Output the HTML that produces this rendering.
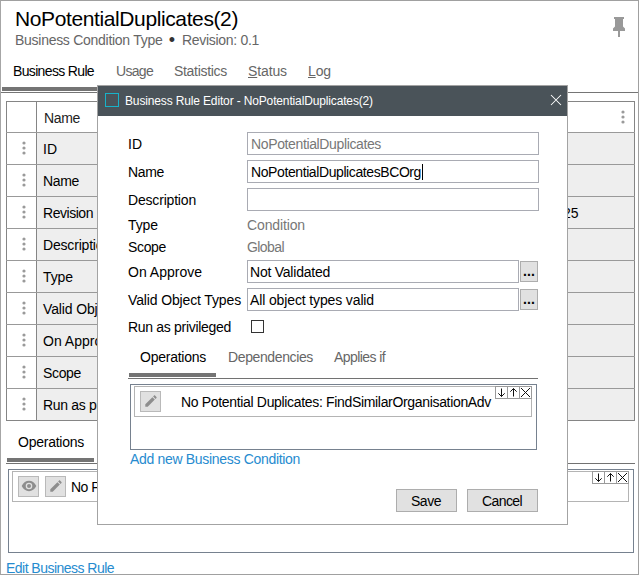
<!DOCTYPE html>
<html lang="en"><head><meta charset="utf-8"><title>Business Rule Editor</title>
<style>
html,body{margin:0;padding:0;background:#fff;}
body{width:639px;height:575px;overflow:hidden;font-family:"Liberation Sans",sans-serif;}
#root{position:relative;width:639px;height:575px;overflow:hidden;background:#fff;}
.t{position:absolute;white-space:pre;line-height:normal;font-family:"Liberation Sans",sans-serif;}
.b{position:absolute;box-sizing:border-box;}
u{text-decoration:underline;}

</style></head>
<body>
<div id="root">
<!-- page frame -->
<div class="b" style="left:0;top:0;width:639px;height:575px;border:1px solid #a0a0a0;border-left:1px solid #a6a6a6;"></div>
<!-- pin icon -->
<svg class="b" style="left:610px;top:14px" width="18" height="26" viewBox="610 14 18 26"><path d="M614 17H624V19H623V26.500L625 28.500V31H620V37H618V31H613V28.500L615 26.500V19H614Z" fill="#999"/></svg>
<!-- top tab bar -->
<div class="b" style="left:2px;top:87px;width:100px;height:4px;background:#747474"></div>
<div class="b" style="left:1px;top:92px;width:637px;height:1px;background:#757575"></div>
<!-- table -->
<div class="b" style="left:6px;top:101px;width:629px;height:320px;border:1px solid #858585;background:#fff"></div>
<div class="b" style="left:37px;top:133px;width:597px;height:287px;background:#eee"></div>
<div class="b" style="left:36px;top:101px;width:1px;height:320px;background:#858585"></div>
<div class="b" style="left:6px;top:132px;width:629px;height:1px;background:#999"></div>
<div class="b" style="left:6px;top:164px;width:629px;height:1px;background:#999"></div>
<div class="b" style="left:6px;top:196px;width:629px;height:1px;background:#999"></div>
<div class="b" style="left:6px;top:228px;width:629px;height:1px;background:#999"></div>
<div class="b" style="left:6px;top:260px;width:629px;height:1px;background:#999"></div>
<div class="b" style="left:6px;top:292px;width:629px;height:1px;background:#999"></div>
<div class="b" style="left:6px;top:324px;width:629px;height:1px;background:#999"></div>
<div class="b" style="left:6px;top:356px;width:629px;height:1px;background:#999"></div>
<div class="b" style="left:6px;top:388px;width:629px;height:1px;background:#999"></div>
<!-- row handles -->
<svg class="b" style="left:0;top:0" width="639" height="575" viewBox="0 0 639 575" fill="#9a9a9a">
<g id="dots"><circle cx="24" cy="143" r="1.600"/><circle cx="24" cy="148" r="1.600"/><circle cx="24" cy="153" r="1.600"/></g>
<g><circle cx="24" cy="175" r="1.600"/><circle cx="24" cy="180" r="1.600"/><circle cx="24" cy="185" r="1.600"/></g>
<g><circle cx="24" cy="207" r="1.600"/><circle cx="24" cy="212" r="1.600"/><circle cx="24" cy="217" r="1.600"/></g>
<g><circle cx="24" cy="239" r="1.600"/><circle cx="24" cy="244" r="1.600"/><circle cx="24" cy="249" r="1.600"/></g>
<g><circle cx="24" cy="271" r="1.600"/><circle cx="24" cy="276" r="1.600"/><circle cx="24" cy="281" r="1.600"/></g>
<g><circle cx="24" cy="303" r="1.600"/><circle cx="24" cy="308" r="1.600"/><circle cx="24" cy="313" r="1.600"/></g>
<g><circle cx="24" cy="335" r="1.600"/><circle cx="24" cy="340" r="1.600"/><circle cx="24" cy="345" r="1.600"/></g>
<g><circle cx="24" cy="367" r="1.600"/><circle cx="24" cy="372" r="1.600"/><circle cx="24" cy="377" r="1.600"/></g>
<g><circle cx="24" cy="399" r="1.600"/><circle cx="24" cy="404" r="1.600"/><circle cx="24" cy="409" r="1.600"/></g>
<g><circle cx="623" cy="112" r="1.600"/><circle cx="623" cy="117" r="1.600"/><circle cx="623" cy="122" r="1.600"/></g>
</svg>
<!-- lower operations tab -->
<div class="b" style="left:7px;top:458px;width:87px;height:4px;background:#747474"></div>
<div class="b" style="left:6px;top:463px;width:629px;height:1px;background:#727272"></div>
<div class="b" style="left:8px;top:469px;width:626px;height:84px;border:1px solid #76818f;background:#fff"></div>
<div class="b" style="left:12px;top:471px;width:617px;height:31px;border:1px solid #b4b4b4;background:#fff"></div>
<div class="b" style="left:18px;top:476px;width:21px;height:21px;border:1px solid #b9b9b9;background:#e1e1e1"></div>
<div class="b" style="left:45px;top:476px;width:21px;height:21px;border:1px solid #b9b9b9;background:#e1e1e1"></div>
<!-- eye icon -->
<svg class="b" style="left:19px;top:477px" width="20" height="19" viewBox="19 477 20 19"><path fill-rule="evenodd" d="M21.700 486C23.300 482.600 26 480.800 29 480.800S34.700 482.600 36.300 486C34.700 489.400 32 491.200 29 491.200S23.300 489.400 21.700 486ZM29 482.700a3.300 3.300 0 1 0 0 6.600 3.300 3.300 0 0 0 0-6.600ZM29 484a2 2 0 1 1 0 4 2 2 0 0 1 0-4Z" fill="#8e8e8e"/></svg>
<!-- pencil icon -->
<svg class="b" style="left:49px;top:480px" width="13" height="13" viewBox="0 0 15 15"><path d="M1.500 13.500v-2.800l8.200-8.200 2.800 2.800-8.200 8.200zM13.300 4.500l-2.800-2.800 1.100-1.100c.3-.3.800-.3 1.100 0l1.700 1.700c.3.300.3.800 0 1.100z" fill="#8e8e8e"/></svg>
<!-- reorder icons (bottom list) -->
<svg class="b" style="left:592px;top:471px" width="37" height="13" viewBox="0 0 37 13">
<rect x="0.500" y="0.500" width="36" height="12" fill="#fff" stroke="#9a9a9a"/>
<path d="M12.500 0.500v12M24.500 0.500v12" stroke="#9a9a9a" fill="none"/>
<path d="M6.500 2.500v8M3.300 7.300l3.200 3.200 3.200-3.200M18.500 10.500v-8M15.300 5.700l3.200-3.200 3.200 3.200M26 2l9 9M35 2l-9 9" stroke="#111" fill="none" stroke-width="1"/>
</svg>

<div class="t" style="left:15px;top:6.66px;font-size:21px;color:#000;letter-spacing:-0.387px;">NoPotentialDuplicates(2)</div>
<div class="t" style="left:15px;top:32.11px;font-size:14px;color:#666;letter-spacing:-0.276px;">Business Condition Type</div>
<div class="t" style="left:168.8px;top:29.92px;font-size:18px;color:#333;letter-spacing:0.000px;">•</div>
<div class="t" style="left:182px;top:32.11px;font-size:14px;color:#666;letter-spacing:-0.303px;">Revision: 0.1</div>
<div class="t" style="left:13px;top:63.11px;font-size:14px;color:#000;letter-spacing:-0.654px;">Business Rule</div>
<div class="t" style="left:116px;top:63.11px;font-size:14px;color:#666;letter-spacing:-0.694px;">Usage</div>
<div class="t" style="left:174px;top:63.11px;font-size:14px;color:#666;letter-spacing:-0.302px;">Statistics</div>
<div class="t" style="left:248px;top:63.11px;font-size:14px;color:#666;letter-spacing:-0.117px;"><u>S</u>tatus</div>
<div class="t" style="left:308px;top:63.11px;font-size:14px;color:#666;letter-spacing:-0.120px;"><u>L</u>og</div>
<div class="t" style="left:44px;top:110.11px;font-size:14px;color:#222;letter-spacing:-0.340px;">Name</div>
<div class="t" style="left:43px;top:141.11px;font-size:14px;color:#000;letter-spacing:0.000px;">ID</div>
<div class="t" style="left:43px;top:173.11px;font-size:14px;color:#000;letter-spacing:-0.340px;">Name</div>
<div class="t" style="left:43px;top:205.11px;font-size:14px;color:#000;letter-spacing:-0.463px;">Revision</div>
<div class="t" style="left:43px;top:237.11px;font-size:14px;color:#000;letter-spacing:-0.185px;">Description</div>
<div class="t" style="left:43px;top:269.11px;font-size:14px;color:#000;letter-spacing:-0.090px;">Type</div>
<div class="t" style="left:43px;top:301.11px;font-size:14px;color:#000;letter-spacing:-0.135px;">Valid Object Types</div>
<div class="t" style="left:43px;top:333.11px;font-size:14px;color:#000;letter-spacing:0.006px;">On Approve</div>
<div class="t" style="left:43px;top:365.11px;font-size:14px;color:#000;letter-spacing:-0.341px;">Scope</div>
<div class="t" style="left:43px;top:397.11px;font-size:14px;color:#000;letter-spacing:-0.304px;">Run as privileged</div>
<div class="t" style="left:563px;top:205.11px;font-size:14px;color:#000;letter-spacing:0.000px;">25</div>
<div class="t" style="left:18px;top:434.11px;font-size:14px;color:#000;letter-spacing:-0.248px;">Operations</div>
<div class="t" style="left:71px;top:479.11px;font-size:14px;color:#000;letter-spacing:-0.550px;">No Potential Duplicates</div>
<div class="t" style="left:6px;top:560.11px;font-size:14px;color:#268bcf;letter-spacing:-0.529px;">Edit Business Rule</div>
<div id="dlg">
<div class="b" style="left:97px;top:85px;width:471px;height:440px;border:1px solid #a3a3a3;background:#fff"></div>
<div class="b" style="left:98px;top:86px;width:469px;height:30px;background:#4a5359"></div>
<div class="b" style="left:105px;top:93px;width:14px;height:14px;border:1px solid #18b2c9"></div>
<svg class="b" style="left:550px;top:94px" width="12" height="12" viewBox="0 0 12 12"><path d="M1 1l10 10M11 1L1 11" stroke="#fff" stroke-width="1.050" fill="none"/></svg>
<!-- inputs -->
<div class="b" style="left:247px;top:132px;width:292px;height:23px;border:1px solid #a9abb3;background:#fff"></div>
<div class="b" style="left:247px;top:160px;width:292px;height:23px;border:1px solid #a9abb3;background:#fff"></div>
<div class="b" style="left:247px;top:188px;width:292px;height:23px;border:1px solid #a9abb3;background:#fff"></div>
<div class="b" style="left:247px;top:260px;width:272px;height:23px;border:1px solid #a9abb3;background:#fff"></div>
<div class="b" style="left:247px;top:288px;width:272px;height:23px;border:1px solid #a9abb3;background:#fff"></div>
<div class="b" style="left:520px;top:261px;width:18px;height:21px;border:1px solid #adadad;background:#e1e1e1"></div>
<div class="b" style="left:520px;top:289px;width:18px;height:21px;border:1px solid #adadad;background:#e1e1e1"></div>
<!-- caret -->
<div class="b" style="left:422px;top:164px;width:1px;height:16px;background:#000"></div>
<!-- checkbox -->
<div class="b" style="left:251px;top:320px;width:13px;height:13px;border:1px solid #333;background:#fff"></div>
<!-- tabs -->
<div class="b" style="left:129px;top:373px;width:87px;height:4px;background:#747474"></div>
<div class="b" style="left:128px;top:378px;width:410px;height:1px;background:#727272"></div>
<div class="b" style="left:130px;top:384px;width:407px;height:66px;border:1px solid #76818f;background:#fff"></div>
<div class="b" style="left:134px;top:386px;width:398px;height:31px;border:1px solid #b4b4b4;background:#fff"></div>
<div class="b" style="left:140px;top:391px;width:21px;height:21px;border:1px solid #b9b9b9;background:#e1e1e1"></div>
<svg class="b" style="left:144px;top:395px" width="13" height="13" viewBox="0 0 15 15"><path d="M1.500 13.500v-2.800l8.200-8.200 2.800 2.800-8.200 8.200zM13.300 4.500l-2.800-2.800 1.100-1.100c.3-.3.800-.3 1.100 0l1.700 1.700c.3.300.3.800 0 1.100z" fill="#8e8e8e"/></svg>
<svg class="b" style="left:495px;top:386px" width="37" height="13" viewBox="0 0 37 13">
<rect x="0.500" y="0.500" width="36" height="12" fill="#fff" stroke="#9a9a9a"/>
<path d="M12.500 0.500v12M24.500 0.500v12" stroke="#9a9a9a" fill="none"/>
<path d="M6.500 2.500v8M3.300 7.300l3.200 3.200 3.200-3.200M18.500 10.500v-8M15.300 5.700l3.200-3.200 3.200 3.200M26 2l9 9M35 2l-9 9" stroke="#111" fill="none" stroke-width="1"/>
</svg>
<!-- buttons -->
<div class="b" style="left:396px;top:489px;width:61px;height:23px;border:1px solid #adadad;background:#e1e1e1"></div>
<div class="b" style="left:467px;top:489px;width:71px;height:23px;border:1px solid #adadad;background:#e1e1e1"></div>

</div>
<div class="t" style="left:125px;top:93.95px;font-size:12px;color:#fff;letter-spacing:-0.145px;">Business Rule Editor - NoPotentialDuplicates(2)</div>
<div class="t" style="left:128px;top:136.11px;font-size:14px;color:#000;letter-spacing:0.000px;">ID</div>
<div class="t" style="left:128px;top:164.11px;font-size:14px;color:#000;letter-spacing:-0.340px;">Name</div>
<div class="t" style="left:128px;top:192.11px;font-size:14px;color:#000;letter-spacing:-0.185px;">Description</div>
<div class="t" style="left:128px;top:217.11px;font-size:14px;color:#000;letter-spacing:-0.090px;">Type</div>
<div class="t" style="left:128px;top:239.11px;font-size:14px;color:#000;letter-spacing:-0.341px;">Scope</div>
<div class="t" style="left:128px;top:264.11px;font-size:14px;color:#000;letter-spacing:0.006px;">On Approve</div>
<div class="t" style="left:128px;top:292.11px;font-size:14px;color:#000;letter-spacing:-0.135px;">Valid Object Types</div>
<div class="t" style="left:128px;top:319.11px;font-size:14px;color:#000;letter-spacing:-0.304px;">Run as privileged</div>
<div class="t" style="left:251px;top:136.11px;font-size:14px;color:#777;letter-spacing:-0.369px;">NoPotentialDuplicates</div>
<div class="t" style="left:251px;top:164.11px;font-size:14px;color:#000;letter-spacing:-0.405px;">NoPotentialDuplicatesBCOrg</div>
<div class="t" style="left:247px;top:217.11px;font-size:14px;color:#777;letter-spacing:-0.128px;">Condition</div>
<div class="t" style="left:247px;top:239.11px;font-size:14px;color:#777;letter-spacing:-0.578px;">Global</div>
<div class="t" style="left:250px;top:264.11px;font-size:14px;color:#000;letter-spacing:-0.232px;">Not Validated</div>
<div class="t" style="left:250px;top:292.11px;font-size:14px;color:#000;letter-spacing:-0.129px;">All object types valid</div>
<div class="t" style="left:140px;top:349.11px;font-size:14px;color:#000;letter-spacing:-0.248px;">Operations</div>
<div class="t" style="left:228px;top:349.11px;font-size:14px;color:#666;letter-spacing:-0.376px;">Dependencies</div>
<div class="t" style="left:334px;top:349.11px;font-size:14px;color:#666;letter-spacing:-0.581px;">Applies if</div>
<div class="t" style="left:181px;top:394.11px;font-size:14px;color:#000;letter-spacing:-0.330px;">No Potential Duplicates: FindSimilarOrganisationAdv</div>
<div class="t" style="left:130px;top:451.11px;font-size:14px;color:#268bcf;letter-spacing:-0.317px;">Add new Business Condition</div>
<div class="t" style="left:523px;top:263.11px;font-size:14px;color:#000;letter-spacing:0.100px;font-weight:bold">...</div>
<div class="t" style="left:523px;top:291.11px;font-size:14px;color:#000;letter-spacing:0.100px;font-weight:bold">...</div>
<div class="t" style="left:411px;top:493.11px;font-size:14px;color:#000;letter-spacing:-0.480px;">Save</div>
<div class="t" style="left:482px;top:493.11px;font-size:14px;color:#000;letter-spacing:-0.599px;">Cancel</div>
</div>
</body></html>
